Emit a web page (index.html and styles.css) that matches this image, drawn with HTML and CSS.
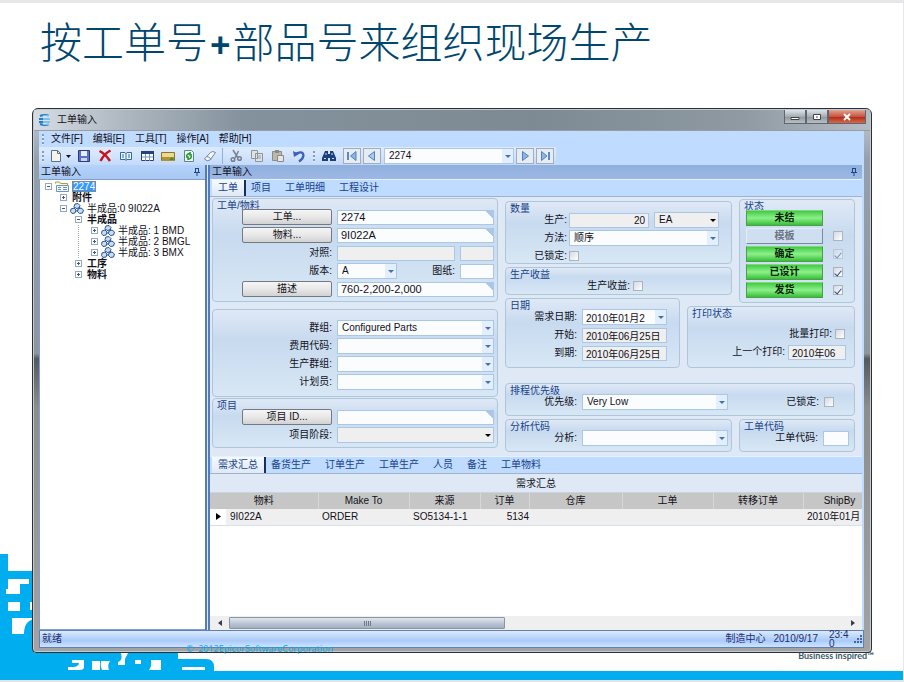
FILE: index.html
```html
<!DOCTYPE html>
<html lang="zh-CN">
<head>
<meta charset="utf-8">
<title>工单输入</title>
<link rel="stylesheet" href="styles.css">
</head>
<body>
<svg class="defs" aria-hidden="true">
  <symbol id="parts" viewBox="0 0 14 11">
    <g fill="#c9dcf2" stroke="#2c5592" stroke-width="1">
      <path d="M5 1l3-.5 2 2-1 2.500-3 .5-2-2z"/>
      <path d="M1 6l3-1 2 2-1 3-3 .5-1.500-2z"/>
      <path d="M8 6l3-1 2.500 2-1 3-3 .5-2-2z"/>
    </g>
    <path d="M5 4l-1 2M9 4l1 2M6 8h2" stroke="#2c5592"/>
  </symbol>
</svg>
<main class="slide">
  <h1>按工单号<b>+</b>部品号来组织现场生产</h1>

  <svg class="art" viewBox="0 0 904 130" preserveAspectRatio="xMinYMax slice" aria-hidden="true">
    <path fill="#00adef" d="M0 2h8v17h26v82h144v6h28q8 0 8 8v4h689v9H0z"/>
    <g fill="#fff">
      <path d="M8 27h21v5h-9v10H6v-5h2z"/>
      <path d="M8 50h12v9H8zM30 50h4v8h-4z"/>
      <path d="M12 66h22v1q-10 2-10 15H12z"/>
      <path d="M72 108h12v8q-1 2-4 2H68v-3h6q5-1 5-4h-7z"/>
      <path d="M92 109h8v9h-8zM101 109h9q-3 4-1 9h-7q-2-4-1-9z"/>
      <path d="M121 101h7l-3 6v6h-7v-3q5-1 3-9zM135 108h6v4h-6z"/>
      <path d="M151 108h10v10h-12q3-4 2-10zM182 115h23v3h-23z"/>
    </g>
  </svg>
  <p class="motto">Business inspired™</p>

  <section class="window">
    <header class="titlebar">
      <svg width="13" height="12" viewBox="0 0 13 12"><path d="M2 2q5-2 9 0M1 5h11M1 8h11M2 10q5 2 9 0" stroke="#1d7fd0" stroke-width="2" fill="none"/><path d="M5 1h7v10H5z" fill="#d9efff" opacity=".55"/></svg>
      <span class="caption">工单输入</span>
      <div class="winbtns">
        <button aria-label="最小化"><svg width="10" height="8"><path d="M1 4.500h8v2H1z" fill="#fff" stroke="#444"/></svg></button>
        <button aria-label="最大化"><svg width="10" height="8"><path d="M1.500 1.500h7v5h-7z" fill="#fff" stroke="#444"/><path d="M4 3.500h2v1H4z" fill="#555"/></svg></button>
        <button class="close" aria-label="关闭"><svg width="10" height="8"><path d="M2 1l6 6M8 1L2 7" stroke="#fff" stroke-width="2"/></svg></button>
      </div>
    </header>

    <div class="client">
      <nav class="menubar">
        <i class="grip"></i>
        <button>文件[F]</button><button>编辑[E]</button><button>工具[T]</button><button>操作[A]</button><button>帮助[H]</button>
      </nav>
      <div class="toolbar">
        <div class="tools">
          <i class="grip"></i>
          <button class="new" aria-label="新建"><svg width="20" height="14" viewBox="0 0 20 14"><path d="M1.500 1.500h6l3 3v8h-9z" fill="#f4f4ea" stroke="#59718b"/><path d="M7.500 1.500v3h3" fill="none" stroke="#59718b"/><path d="M16 6h5l-2.500 3z" fill="#111"/></svg></button>
          <button aria-label="保存"><svg viewBox="0 0 14 14"><path d="M1.500 1.500h11v11h-11z" fill="#5b71c5" stroke="#29388a"/><path d="M4 2h6v5H4z" fill="#e8edfb"/><path d="M4 9h6v3H4z" fill="#cdd3e8"/></svg></button>
          <button aria-label="删除"><svg viewBox="0 0 14 14"><path d="M1.500 2q6 3 10.500 10M12.500 1.500Q6 5 2.500 12" stroke="#c8141b" stroke-width="2.500" fill="none"/></svg></button>
          <button aria-label="浏览"><svg viewBox="0 0 14 14"><path d="M1.500 3.500h4.500l1 1 1-1h4.500v7H8l-1 1-1-1H1.500z" fill="#eef6ff" stroke="#2d68a8"/><path d="M7 4v7M3 6h2M3 8h2M9 6h2M9 8h2" stroke="#2d68a8"/></svg></button>
          <button aria-label="列表"><svg viewBox="0 0 14 14"><path d="M1.500 2.500h12v9h-12z" fill="#fff" stroke="#24427e"/><path d="M1 2h13v3H1z" fill="#24427e"/><path d="M2 8h11M5.500 5v7M9.500 5v7" stroke="#7d93b8"/></svg></button>
          <button aria-label="备忘"><svg viewBox="0 0 14 14"><path d="M.5 3.500h13v8H.5z" fill="#efd98a" stroke="#8a7433"/><path d="M1 8h12v4H1z" fill="#b39233"/><path d="M8 11l3-3 2 3z" fill="#4d8734"/></svg></button>
          <button aria-label="刷新"><svg viewBox="0 0 14 14"><path d="M2.500 1.500h7l2 2v9h-9z" fill="#eafae6" stroke="#5b8791"/><path d="M4.500 7q1-3 4-2M9.500 7q-1 4-4 2.500M8 3v3h2M6 11V8H4" stroke="#23912c" stroke-width="1.500" fill="none"/></svg></button>
          <button aria-label="清除"><svg viewBox="0 0 14 14"><path d="M1.500 10l6-6.500q2-2 5 0l-5.500 7.500q-3 2-5.500-1z" fill="#f6f9fd" stroke="#6e86a5"/><path d="M4 7.500q3 .5 4 3" stroke="#6e86a5" fill="none"/></svg></button>
          <i class="rule"></i>
          <button aria-label="剪切"><svg viewBox="0 0 14 14"><path d="M4 1l5 8M9.500 2L6 9" stroke="#76808d" stroke-width="1.500"/><circle cx="4" cy="10.500" r="1.800" fill="none" stroke="#76808d" stroke-width="1.500"/><circle cx="10.500" cy="9.500" r="1.800" fill="none" stroke="#76808d" stroke-width="1.500"/></svg></button>
          <button aria-label="复制"><svg viewBox="0 0 14 14"><path d="M1.500 1.500h6v8h-6zM5.500 4.500h7v8h-7z" fill="#dfe2e4" stroke="#8f9698"/><path d="M7 7h4M7 9h4" stroke="#9a9fa2"/></svg></button>
          <button aria-label="粘贴"><svg viewBox="0 0 14 14"><path d="M1.500 2.500h9v9h-9z" fill="#bbb8ae" stroke="#8c8a85"/><path d="M4 1h4v3H4z" fill="#8c8a85"/><path d="M6.500 6.500h6v6h-6z" fill="#e6e6e4" stroke="#8c8a85"/></svg></button>
          <button aria-label="撤消"><svg viewBox="0 0 14 14"><path d="M3 5q8-4 8.500 1.500Q11 10 7 12.500" stroke="#3b5fc0" stroke-width="2.200" fill="none"/><path d="M1 2l1 6 5-3z" fill="#3b5fc0"/></svg></button>
          <i class="grip"></i>
          <button aria-label="查找"><svg viewBox="0 0 14 14"><path d="M3 2h3v3h2V2h3l3 7v3H8V9H6v3H0V9z" fill="#1b3f7e"/><path d="M2 9.500h2M10 9.500h2M4 4v2M10 4v2" stroke="#cfe0ff"/></svg></button>
          <button class="step" aria-label="首条"><svg viewBox="0 0 14 14"><path d="M3 3v8" stroke="#5a8ac0" stroke-width="2"/><path d="M11 2.500v9L5.500 7z" fill="#8fb5de" stroke="#4f82bb"/></svg></button>
          <button class="step" aria-label="上一条"><svg viewBox="0 0 14 14"><path d="M9.500 2.500v9L3.500 7z" fill="#a9c8ea" stroke="#4f82bb"/></svg></button>
          <span class="drop record"><select aria-label="工单号"><option>2274</option></select><i></i></span>
          <button class="step" aria-label="下一条"><svg viewBox="0 0 14 14"><path d="M4.500 2.500v9l6-4.500z" fill="#8fb5de" stroke="#4f82bb"/></svg></button>
          <button class="step" aria-label="末条"><svg viewBox="0 0 14 14"><path d="M11 3v8" stroke="#5a8ac0" stroke-width="2"/><path d="M3.500 2.500v9L9 7z" fill="#8fb5de" stroke="#4f82bb"/></svg></button>
        </div>
      </div>

      <div class="workspace">
        <aside class="side">
          <h2 class="panelhead">工单输入<svg width="8" height="8" viewBox="0 0 8 8"><path d="M2.500 0v4M5.500 0v4M1 4.500h6M2 .5h4M4 5v3" stroke="#1e4587"/></svg></h2>
          <ul class="tree">
            <li><div class="node"><i class="tog minus"></i><svg width="14" height="11" viewBox="0 0 14 11"><path d="M.5 2.500V1h4l1 1.500h7V5" fill="#fff3b8" stroke="#a99a55"/><path d="M1.500 4.500h12v6h-12z" fill="#eff6fd" stroke="#6f93b9"/><path d="M3 6.500h3M8 6.500h4M3 8.500h3M8 8.500h4" stroke="#6f93b9"/></svg><span class="sel">2274</span></div>
              <ul>
                <li><div class="node"><i class="tog plus"></i><b>附件</b></div></li>
                <li><div class="node"><i class="tog minus"></i><svg width="14" height="11"><use href="#parts"/></svg><span>半成品:0 9I022A</span></div>
                  <ul>
                    <li class="open"><div class="node"><i class="tog minus"></i><b>半成品</b></div>
                      <ul>
                        <li><div class="node"><i class="tog plus"></i><svg width="14" height="11"><use href="#parts"/></svg><span>半成品: 1 BMD</span></div></li>
                        <li><div class="node"><i class="tog plus"></i><svg width="14" height="11"><use href="#parts"/></svg><span>半成品: 2 BMGL</span></div></li>
                        <li><div class="node"><i class="tog plus"></i><svg width="14" height="11"><use href="#parts"/></svg><span>半成品: 3 BMX</span></div></li>
                      </ul>
                    </li>
                    <li><div class="node"><i class="tog plus"></i><b>工序</b></div></li>
                    <li><div class="node"><i class="tog plus"></i><b>物料</b></div></li>
                  </ul>
                </li>
              </ul>
            </li>
          </ul>
        </aside>

        <section class="detail">
          <h2 class="panelhead dark">工单输入<svg width="8" height="8" viewBox="0 0 8 8"><path d="M2.500 0v4M5.500 0v4M1 4.500h6M2 .5h4M4 5v3" stroke="#1e4587"/></svg></h2>
          <nav class="tabs"><button class="on">工单</button><button>项目</button><button>工单明细</button><button>工程设计</button></nav>

          <form class="form">
            <div class="leftcol">
              <section class="group">
                <h3>工单/物料</h3>
                <div class="rows wide">
                  <button type="button" class="btn">工单...</button><input class="key" aria-label="工单" value="2274">
                  <button type="button" class="btn">物料...</button><input class="key" aria-label="物料" value="9I022A">
                  <label for="ref">对照:</label><div class="split"><input id="ref" class="grow" readonly><input class="mini" aria-label="对照代码" readonly></div>
                  <label for="rev">版本:</label><div class="split"><span class="drop short"><select id="rev"><option>A</option></select><i></i></span><label for="dwg" class="grow">图纸:</label><input id="dwg" class="mini"></div>
                  <button type="button" class="btn">描述</button><input class="key" aria-label="描述" value="760-2,200-2,000">
                </div>
              </section>
              <section class="group second">
                <div class="rows wide">
                  <label for="grp">群组:</label><span class="drop"><select id="grp"><option>Configured Parts</option></select><i></i></span>
                  <label for="fee">费用代码:</label><span class="drop"><select id="fee"></select><i></i></span>
                  <label for="pgrp">生产群组:</label><span class="drop"><select id="pgrp"></select><i></i></span>
                  <label for="planner">计划员:</label><span class="drop"><select id="planner"></select><i></i></span>
                </div>
              </section>
              <section class="group">
                <h3>项目</h3>
                <div class="rows wide">
                  <button type="button" class="btn">项目 ID...</button><input class="key" aria-label="项目 ID">
                  <label for="phase">项目阶段:</label><span class="drop off"><select id="phase"></select><i></i></span>
                </div>
              </section>
            </div>

            <div class="rightcol">
              <section class="group qty">
                <h3>数量</h3>
                <div class="rows">
                  <label for="prod">生产:</label><div class="split"><input id="prod" class="grow num" value="20" readonly><span class="drop off unit"><select aria-label="单位"><option>EA</option></select><i></i></span></div>
                  <label for="method">方法:</label><span class="drop"><select id="method"><option>顺序</option></select><i></i></span>
                  <label for="qlock">已锁定:</label><input id="qlock" type="checkbox">
                </div>
              </section>
              <section class="group yield">
                <h3>生产收益</h3>
                <div class="rows"><label for="yld">生产收益:</label><input id="yld" type="checkbox"></div>
              </section>
              <section class="group status">
                <h3>状态</h3>
                <div class="rows">
                  <button type="button" class="flag">未结</button><span></span>
                  <button type="button" class="flag idle">模板</button><input type="checkbox" aria-label="模板">
                  <button type="button" class="flag">确定</button><input type="checkbox" aria-label="确定" checked disabled>
                  <button type="button" class="flag">已设计</button><input type="checkbox" aria-label="已设计" checked>
                  <button type="button" class="flag">发货</button><input type="checkbox" aria-label="发货" checked>
                </div>
              </section>
              <section class="group dates">
                <h3>日期</h3>
                <div class="rows">
                  <label for="need">需求日期:</label><span class="drop"><input id="need" value="2010年01月2"><i></i></span>
                  <label for="start">开始:</label><input id="start" value="2010年06月25日" readonly>
                  <label for="due">到期:</label><input id="due" value="2010年06月25日" readonly>
                </div>
              </section>
              <section class="group print">
                <h3>打印状态</h3>
                <div class="rows">
                  <label for="batch" class="span">批量打印:</label><input id="batch" type="checkbox">
                  <label for="last">上一个打印:</label><input id="last" class="two" value="2010年06" readonly>
                </div>
              </section>
              <section class="group sched">
                <h3>排程优先级</h3>
                <div class="rows">
                  <label for="prio">优先级:</label><span class="drop"><select id="prio"><option>Very Low</option></select><i></i></span>
                  <label for="slock">已锁定:</label><input id="slock" type="checkbox">
                </div>
              </section>
              <section class="group analysis">
                <h3>分析代码</h3>
                <div class="rows"><label for="ana">分析:</label><span class="drop"><select id="ana"></select><i></i></span></div>
              </section>
              <section class="group code">
                <h3>工单代码</h3>
                <div class="rows"><label for="code">工单代码:</label><input id="code"></div>
              </section>
            </div>
          </form>

          <nav class="tabs lower"><button class="on">需求汇总</button><button>备货生产</button><button>订单生产</button><button>工单生产</button><button>人员</button><button>备注</button><button>工单物料</button></nav>
          <div class="grid">
            <div class="gridtitle">需求汇总</div>
            <table>
              <colgroup><col class="c-mark"><col class="c-item"><col class="c-make"><col class="c-src"><col class="c-ord"><col class="c-wh"><col class="c-job"><col class="c-tr"><col class="c-ship"></colgroup>
              <thead><tr><th colspan="2">物料</th><th>Make To</th><th>来源</th><th>订单</th><th>仓库</th><th>工单</th><th>转移订单</th><th>ShipBy</th></tr></thead>
              <tbody><tr><td class="mark"><svg width="5" height="7"><path d="M0 0l5 3.500L0 7z"/></svg></td><td>9I022A</td><td>ORDER</td><td>SO5134-1-1</td><td class="num">5134</td><td></td><td></td><td></td><td>2010年01月</td></tr></tbody>
            </table>
            <div class="scroll"><i class="arrow left"></i><span class="track"><span class="thumb"></span></span><i class="arrow right"></i></div>
          </div>
        </section>
      </div>

      <footer class="statusbar">
        <span class="ready">就绪</span><span>制造中心</span><span>2010/9/17</span><span class="clock">23:40</span>
        <svg width="10" height="10" viewBox="0 0 10 10"><path d="M7 1h2v2H7zM4 4h2v2H4zM7 4h2v2H7zM1 7h2v2H1zM4 7h2v2H4zM7 7h2v2H7z" fill="#46679c"/></svg>
      </footer>
    </div>
  </section>
  <p class="copyright">©&nbsp; 2012EpicorSoftwareCorporation</p>
</main>
</body>
</html>
```
FILE: styles.css
```css
* { box-sizing: border-box; }
body, h1, h2, h3, p, ul { margin: 0; padding: 0; }
ul { list-style: none; }
button, input, select { font: inherit; color: inherit; margin: 0; border-radius: 0; min-width: 0; }
.defs { position: absolute; width: 0; height: 0; }

body {
  font: 10px/12px "Liberation Sans", "Noto Sans CJK SC", sans-serif;
  color: #101018;
  background: #fff;
}
.slide {
  position: relative;
  display: flex;
  flex-direction: column;
  height: 100vh;
  min-height: 640px;
  padding: 0 31px 27px 32px;
  overflow: hidden;
  border-top: 3px solid #e6e7e9;
  border-right: 1px solid #e6e7e9;
  border-bottom: 2px solid #e2e3e5;
}
h1 {
  height: 105px;
  padding: 5px 0 0 8px;
  font: 300 42px/64px "Noto Sans CJK SC", sans-serif;
  color: #00476f;
  white-space: nowrap;
}
h1 b { margin: 0 2px; font: 700 36px/40px "Open Sans", sans-serif; }
.art { position: absolute; left: 0; bottom: -2px; width: 100%; height: 130px; }
.motto {
  position: absolute;
  right: 29px;
  bottom: 18px;
  font: 700 9px/12px Lato, sans-serif;
  color: #3b5868;
}
.copyright {
  position: absolute;
  left: 186px;
  bottom: 25px;
  font: 9px/12px "Open Sans", sans-serif;
  color: #00adef;
}

/* window frame */
.window {
  position: relative;
  flex: 1;
  min-height: 0;
  display: flex;
  flex-direction: column;
  padding: 0 7px 4px 6px;
  border: 1px solid #2b3036;
  border-radius: 6px 6px 4px 4px;
  background: linear-gradient(#c5ced8 0, #94a0ad 50px, #8e969d 45%, #55595e 46%, #8d8d8d 55%, #a3a3a3);
  box-shadow: inset 0 0 0 1px #c3ccd4;
}
.titlebar {
  display: flex;
  align-items: center;
  height: 21px;
  margin: 1px -6px 0 -5px;
  padding-left: 4px;
  background: linear-gradient(90deg, #d5dbe1, #aab4bd 12%, #84929d 25%, #7d8a93 60%, #8f9aa2 85%, #b5bdc4);
  border-bottom: 1px solid #9a9c9f;
}
.caption { flex: 1; padding-left: 6px; }
.winbtns { display: flex; align-self: flex-start; margin-right: 4px; }
.winbtns button {
  display: grid;
  place-items: center;
  width: 22px;
  height: 14px;
  padding: 0;
  border: 1px solid #5f666d;
  border-top: 0;
  background: linear-gradient(#dfe4e8, #a4adb5 50%, #8d969e 52%, #b8c0c7);
}
.winbtns .close { width: 38px; background: linear-gradient(#dfa497, #c95440 50%, #ae2a17 52%, #d46a4b); }
.client { flex: 1; min-height: 0; display: flex; flex-direction: column; background: #bfdbff; }

/* menu and toolbar */
.menubar, .tools { display: flex; align-items: center; }
.menubar { height: 16px; padding-left: 3px; }
.menubar button { border: 0; padding: 0; background: none; margin-right: 10px; }
.menubar .grip { margin-right: 6px; }
.grip { width: 3px; height: 11px; background: repeating-linear-gradient(#7d9cc9 0 2px, #dfecff 2px 4px); background-size: 2px 100%; background-repeat: no-repeat; }
.toolbar { height: 18px; display: flex; }
.tools { padding: 0 2px 0 3px; background: linear-gradient(#dcebff, #d3e4fb 50%, #c3dafa); }
.tools button { display: grid; place-items: center; width: 21px; height: 16px; padding: 0; border: 0; background: none; }
.tools svg { width: 14px; height: 14px; }
.tools .new { width: 26px; margin: 0 0 0 2px; }
.tools .new svg { width: 20px; overflow: visible; }
.rule { width: 1px; height: 16px; margin: 0 2px 0 2px; background: #8fb0dd; }
.tools .grip { margin-left: 0; }
.tools .rule ~ .grip { margin: 0 2px 0 4px; }
.tools .step { width: 18px; margin-left: 2px; border: 1px solid #a3acb8; background: #e6ecf3; }
.tools .rule ~ .grip + button + .step { margin-left: 4px; }
.record { width: 130px; height: 16px; margin-left: 3px; }

/* work area */
.workspace { flex: 1; min-height: 0; display: flex; padding-right: 2px; }
.panelhead {
  display: flex;
  justify-content: space-between;
  align-items: center;
  height: 14px;
  padding: 0 4px 0 2px;
  font-size: 10px;
  font-weight: 400;
  background: linear-gradient(#b5d2fb, #a8c8f2);
}
.panelhead.dark { background: linear-gradient(#8fafdc, #9db8e6); }
.side { flex: 0 0 166px; display: flex; flex-direction: column; }
.tree { flex: 1; padding: 1px 0 0 5px; background: #fff; border: 1px solid #7ea0cf; border-right: 0; }
.tree ul { padding-left: 15px; }
.tree .open > ul { border-left: 1px dotted #aaa; margin-left: 3px; padding-left: 12px; }
.node { display: flex; align-items: center; gap: 3px; height: 11px; line-height: 11px; white-space: nowrap; }
.node b { margin-left: 2px; }
.sel { padding: 0 1px; color: #fff; background: #3399ff; outline: 1px dotted #c8743a; outline-offset: -1px; }
.tog { width: 7px; height: 7px; border: 1px solid #98a8bc; background: linear-gradient(#38569a, #38569a) center / 3px 1px no-repeat #fff; }
.tog.plus { background: linear-gradient(#38569a, #38569a) center / 3px 1px no-repeat, linear-gradient(#38569a, #38569a) center / 1px 3px no-repeat #fff; }
.detail { flex: 1; min-width: 0; display: flex; flex-direction: column; border-left: 5px double #527bb8; background: #dfe9f5; }
.tabs { display: flex; height: 18px; padding: 1px 0 0 2px; color: #15428b; background: #bfdbff; border-bottom: 1px solid #9fb3cc; box-shadow: inset 0 1px #e6f1ff; }
.tabs button { padding: 0 7px; border: 0; background: none; white-space: nowrap; }
.tabs button:nth-child(2) { padding-left: 5px; }
.tabs .on { padding: 0 6px; background: linear-gradient(#f5faff, #dfe9f5); border-right: 2px solid #142f5f; }

/* form */
.form {
  display: grid;
  grid-template-columns: minmax(0, 286fr) minmax(0, 350fr);
  gap: 7px;
  padding: 1px 7px 4px 2px;
}
.leftcol { display: flex; flex-direction: column; }
.rightcol {
  display: grid;
  grid-template-columns: minmax(0, 175fr) minmax(0, 45fr) minmax(0, 116fr);
  grid-template-rows: 63px 28px 5px 62px 45px 33px;
  gap: 3px 7px;
  margin-top: 3px;
}
.group {
  border: 1px solid #afc6da;
  border-radius: 4px;
  background: linear-gradient(#dfe9f6, #c8daef 35%, #d7e7f5);
  padding-bottom: 4px;
}
.group h3 { height: 10px; padding-left: 4px; font-size: 10px; font-weight: 400; line-height: 14px; color: #15428b; }
.second { margin: 7px 0 1px; padding: 10px 0 6px; }
.rows { display: grid; grid-auto-rows: 16px; gap: 2px 5px; align-items: center; }
.rows label { text-align: right; white-space: nowrap; }
.wide { grid-template-columns: 90px minmax(0, 1fr); padding: 0 3px 0 29px; }
.qty { grid-area: 1 / 1 / 2 / 3; }
.qty .rows { grid-template-columns: 61px minmax(0, 1fr); column-gap: 2px; padding-right: 12px; }
.yield { grid-area: 2 / 1 / 3 / 3; }
.yield .rows { grid-template-columns: 124px 1fr; column-gap: 3px; }
.status { grid-area: 1 / 3 / 4 / 4; margin-top: -2px; }
.status .rows { grid-template-columns: minmax(0, 1fr) 10px; column-gap: 10px; padding: 0 11px 0 6px; }
.dates { grid-area: 3 / 1 / 5 / 2; }
.dates .rows { grid-template-columns: 71px minmax(0, 1fr); padding-right: 12px; }
.print { grid-area: 4 / 2 / 5 / 4; }
.print .rows { grid-template-columns: minmax(0, 1fr) 44px 11px; padding: 9px 8px 0 0; column-gap: 3px; }
.print .span { grid-column: span 2; }
.print .two { grid-column: span 2; }
.sched { grid-area: 5 / 1 / 6 / 4; margin-top: 12px; }
.sched .rows { grid-template-columns: 71px 146px minmax(0, 1fr) 10px; padding-right: 20px; }
.analysis { grid-area: 6 / 1 / 7 / 3; }
.analysis .rows { grid-template-columns: 71px minmax(0, 1fr); padding-right: 3px; }
.code { grid-area: 6 / 3 / 7 / 4; }
.code .rows { grid-template-columns: minmax(0, 1fr) 26px; padding-right: 5px; }

.split { display: flex; align-items: center; gap: 5px; }
.grow { flex: 1; }
.mini { flex: 0 0 34px; }
.short { flex: 0 0 60px; }
.unit { flex: 0 0 65px; }
input:not([type]), .drop { width: 100%; height: 16px; border: 1px solid #abc7e6; background: #fbfcfe; }
input:not([type]) { height: 15px; padding: 0 3px; outline: 0; }
input[readonly]:not([type]) { background: #efefef; }
input.key { font-size: 11px; background: linear-gradient(225deg, #abc7e6 5px, #fbfcfe 5px); }
input.mini { width: 34px; }
input.num { text-align: right; padding-right: 3px; }
.drop { display: grid; grid-template-columns: minmax(0, 1fr) 11px; }
.drop.record { width: 130px; }
.drop.short { width: 60px; }
.drop.unit { width: 65px; }
.drop select, .drop input:not([type]) { grid-area: 1 / 1 / 2 / 3; width: 100%; height: 14px; padding: 0 4px; border: 0; outline: 0; appearance: none; background: none; }
.drop input:not([type]) { padding-left: 3px; }
.drop > i { grid-area: 1 / 2; display: grid; place-items: center; background: #e3efff; pointer-events: none; color: #4472ab; }
.drop > i::after { content: ""; border: 3px solid transparent; border-top-color: currentColor; border-bottom: 0; }
.drop.off { background: #efefef; }
.drop.off > i { background: none; color: #000; }
.btn { height: 16px; padding: 0; line-height: 12px; border: 1px solid #747a80; border-radius: 2px; background: linear-gradient(#f5f5f5, #e8e8e8 50%, #d2d2d2); }
.flag { height: 16px; padding: 0; line-height: 12px; font-weight: 700; border: 1px solid #4a9e4c; border-top-color: #7cd97c; background: linear-gradient(#44c944, #8cf08a 50%, #38bf38); color: #052305; }
.flag.idle { color: #6c747e; background: #cfdff2; border-color: #e4eefa #7d8998 #7d8998 #e4eefa; }
input[type="checkbox"] { appearance: none; display: grid; place-items: center; width: 10px; height: 10px; border: 1px solid #a9b4c0; background: linear-gradient(135deg, #d5d9df, #fff); }
input[type="checkbox"]:checked::after { content: ""; width: 3px; height: 6px; border: solid #2d4a82; border-width: 0 1px 1px 0; transform: rotate(40deg); }
input[type="checkbox"]:disabled { opacity: .5; }

/* result grid */
.grid { flex: 1; min-height: 0; display: flex; flex-direction: column; background: #fff; overflow: hidden; }
.gridtitle { flex: none; height: 19px; line-height: 20px; text-align: center; background: #dfe9f5; border-bottom: 1px solid #c9d4e0; }
table { width: 666px; min-width: 100%; table-layout: fixed; border-collapse: collapse; white-space: nowrap; }
th { height: 16px; padding: 0; font-weight: 400; background: #c6c6c6; border-right: 1px solid #d8d8d8; }
td { height: 16px; padding: 0 0 0 4px; background: #efefef; border-bottom: 1px solid #d4e0ec; }
td.num { text-align: right; padding: 0; }
td.mark { padding: 0 0 0 6px; background: #fff; }
.c-mark { width: 16px; }
.c-item { width: 92px; }
.c-make { width: 91px; }
.c-src { width: 71px; }
.c-ord { width: 49px; }
.c-wh { width: 93px; }
.c-job { width: 91px; }
.c-tr { width: 90px; }
.c-ship { width: 73px; }
.scroll { flex: none; display: flex; align-items: center; height: 14px; margin-top: auto; background: #efefef; }
.arrow { width: 19px; display: grid; place-items: center; }
.arrow::after { content: ""; border: 3px solid transparent; }
.arrow.left::after { border-right: 4px solid #333c50; border-left: 0; }
.arrow.right::after { border-left: 4px solid #333c50; border-right: 0; }
.track { flex: 1; }
.thumb { display: block; width: 45%; height: 12px; border: 1px solid #8795a5; border-radius: 1px; background: repeating-linear-gradient(90deg, #6e7885 0 1px, transparent 1px 2px) center / 7px 5px no-repeat, linear-gradient(#e1e7ee, #b6c2d0 60%, #a2b0c1); }

.statusbar { display: flex; align-items: center; gap: 8px; height: 18px; padding: 0 0 0 2px; color: #1e2d70; border: 1px solid #5b81b8; background: linear-gradient(#dceaff, #a9cbf8 60%, #cfe2ff); }
.ready { flex: 1; }
.clock { width: 20px; margin: 0 -4px 0 3px; line-height: 9px; word-break: break-all; }
```
